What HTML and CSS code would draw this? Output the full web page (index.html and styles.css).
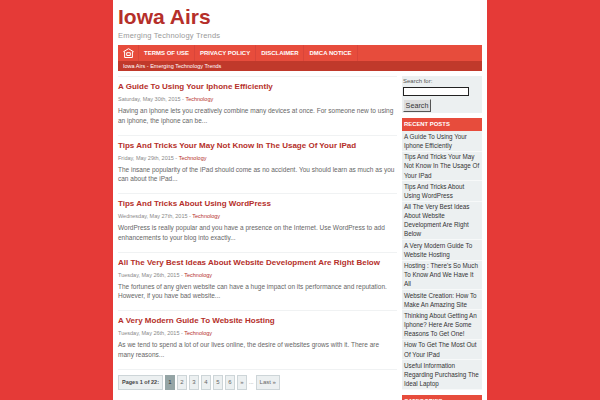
FILE: index.html
```html
<!DOCTYPE html>
<html lang="en">
<head>
<meta charset="UTF-8">
<title>Iowa Airs</title>
<link rel="stylesheet" href="styles.css">
</head>
<body>
<div class="wrapper">
  <div class="site-title">Iowa Airs</div>
  <div class="site-desc">Emerging Technology Trends</div>

  <div class="nav">
    <a class="nav-item nav-home">
      <svg width="11" height="10" viewBox="0 0 11 10" fill="none" stroke="#fff" stroke-width="1"><path d="M0.3 3.8 5.5 0.7 10.7 3.8"/><path d="M1.6 3.4V9.5H9.4V3.4"/><path d="M3.7 4.7H7.3V7.5H3.7Z"/></svg>
    </a>
    <a class="nav-item">TERMS OF USE</a>
    <a class="nav-item">PRIVACY POLICY</a>
    <a class="nav-item">DISCLAIMER</a>
    <a class="nav-item">DMCA NOTICE</a>
  </div>
  <div class="subnav">Iowa Airs - Emerging Technology Trends</div>

  <div class="columns">
    <div class="content">
      <div class="post">
        <h2 class="post-title">A Guide To Using Your Iphone Efficiently</h2>
        <div class="post-meta">Saturday, May 30th, 2015 - <a>Technology</a></div>
        <p>Having an iphone lets you creatively combine many devices at once. For someone new to using an iphone, the iphone can be...</p>
      </div>
      <div class="post">
        <h2 class="post-title">Tips And Tricks Your May Not Know In The Usage Of Your IPad</h2>
        <div class="post-meta">Friday, May 29th, 2015 - <a>Technology</a></div>
        <p>The insane popularity of the iPad should come as no accident. You should learn as much as you can about the iPad...</p>
      </div>
      <div class="post">
        <h2 class="post-title">Tips And Tricks About Using WordPress</h2>
        <div class="post-meta">Wednesday, May 27th, 2015 - <a>Technology</a></div>
        <p>WordPress is really popular and you have a presence on the Internet. Use WordPress to add enhancements to your blog into exactly...</p>
      </div>
      <div class="post">
        <h2 class="post-title">All The Very Best Ideas About Website Development Are Right Below</h2>
        <div class="post-meta">Tuesday, May 26th, 2015 - <a>Technology</a></div>
        <p>The fortunes of any given website can have a huge impact on its performance and reputation. However, if you have bad website...</p>
      </div>
      <div class="post">
        <h2 class="post-title">A Very Modern Guide To Website Hosting</h2>
        <div class="post-meta">Tuesday, May 26th, 2015 - <a>Technology</a></div>
        <p>As we tend to spend a lot of our lives online, the desire of websites grows with it. There are many reasons...</p>
      </div>
      <div class="pagination">
        <span class="page page-label">Pages 1 of 22:</span>
        <span class="page page-current">1</span>
        <span class="page">2</span>
        <span class="page">3</span>
        <span class="page">4</span>
        <span class="page">5</span>
        <span class="page">6</span>
        <span class="page">»</span>
        <span class="page-dots">...</span>
        <span class="page page-last">Last »</span>
      </div>
    </div>

    <div class="sidebar">
      <div class="search">
        <label class="search-label">Search for:</label>
        <input class="search-input" type="text">
        <button class="search-btn">Search</button>
      </div>
      <div class="widget-title">RECENT POSTS</div>
      <ul class="widget-list">
        <li>A Guide To Using Your Iphone Efficiently</li>
        <li>Tips And Tricks Your May Not Know In The Usage Of Your IPad</li>
        <li>Tips And Tricks About Using WordPress</li>
        <li>All The Very Best Ideas About Website Development Are Right Below</li>
        <li>A Very Modern Guide To Website Hosting</li>
        <li>Hosting : There's So Much To&nbsp;Know And We Have It All</li>
        <li>Website Creation: How To Make An Amazing Site</li>
        <li>Thinking About Getting An Iphone? Here Are Some Reasons To Get One!</li>
        <li>How To Get The Most Out Of Your IPad</li>
        <li>Useful Information Regarding Purchasing The Ideal Laptop</li>
      </ul>
      <div class="widget-title">CATEGORIES</div>
    </div>
  </div>
</div>
</body>
</html>
```

FILE: styles.css
```css
:root {
  --red: #e74c3c;
  --red-page: #e53a37;
  --red-dark: #c0392b;
  --title-red: #b52f2a;
  --panel: #ecf0f1;
  --line: #f0f2f3;
  --text: #666;
}

* {
  margin: 0;
  padding: 0;
  box-sizing: border-box;
}

html, body {
  height: 400px;
  overflow: hidden;
}

body {
  font-family: "Liberation Sans", Arial, sans-serif;
  background: var(--red-page);
}

.wrapper {
  width: 374px;
  height: 400px;
  margin: 0 auto;
  padding: 0 5px;
  background: #fff;
  overflow: hidden;
}

.site-title {
  font-size: 21px;
  font-weight: bold;
  color: var(--title-red);
  line-height: 26px;
  padding-top: 4px;
  height: 31px;
}

.site-desc {
  font-size: 7.5px;
  letter-spacing: 0.2px;
  color: #999;
  line-height: 10px;
  margin-bottom: 4px;
}

.nav {
  display: flex;
  height: 16px;
  background: var(--red);
}

.nav-item {
  display: flex;
  align-items: center;
  padding: 0 5px;
  font-size: 6px;
  font-weight: bold;
  color: #fff;
  border-right: 1px solid #d9453a;
}

.nav-home {
  padding: 0 4px 0 5px;
}

.subnav {
  height: 10px;
  line-height: 10px;
  padding-left: 5px;
  font-size: 5.5px;
  color: #fff;
  background: var(--red-dark);
}

.columns {
  display: flex;
  gap: 5px;
  margin-top: 5px;
}

.content {
  width: 279px;
}

.post {
  height: 58.5px;
  border-top: 1px solid var(--line);
  padding-top: 4px;
}

.post-title {
  font-size: 8px;
  font-weight: bold;
  color: var(--title-red);
  line-height: 12px;
}

.post-meta {
  font-size: 5.5px;
  color: #888;
  line-height: 9px;
  margin-top: 2px;
}

.post-meta a {
  color: var(--title-red);
}

.post p {
  font-size: 6.5px;
  color: var(--text);
  line-height: 9.75px;
  margin-top: 2px;
  padding-right: 2px;
}

.pagination {
  display: flex;
  align-items: center;
  gap: 2px;
  border-top: 1px solid var(--line);
  padding-top: 5px;
}

.page {
  font-size: 6px;
  color: #666;
  background: var(--panel);
  border: 1px solid #cdd5d8;
  height: 15px;
  line-height: 13px;
  padding: 0 2px;
  min-width: 10px;
  text-align: center;
}

.page-label {
  font-size: 5.5px;
  font-weight: bold;
  color: #444;
  padding: 0 3px;
}

.page-current {
  background: #95a5a6;
  border-color: #95a5a6;
  color: #333;
}

.page-last {
  padding: 0 3px;
}

.page-dots {
  font-size: 5.5px;
  color: #888;
}

.sidebar {
  width: 80px;
}

.search {
  background: var(--panel);
  padding: 1px 1px 1px;
  margin-bottom: 5px;
  height: 37px;
}

.search-label {
  display: block;
  font-size: 6px;
  color: #555;
  line-height: 9px;
}

.search-input {
  display: block;
  width: 66px;
  height: 9px;
  margin-top: 1px;
  background: #fff;
  border: 1px solid #222;
}

.search-btn {
  display: block;
  margin-top: 3px;
  width: 28px;
  height: 13px;
  font-family: inherit;
  font-size: 7.2px;
  color: #333;
  background: #ddd;
  border: 1px solid #555;
  border-top-color: #eee;
  border-left-color: #eee;
}

.widget-title {
  height: 13px;
  line-height: 13px;
  padding-left: 2px;
  font-size: 5.9px;
  font-weight: bold;
  color: #fff;
  background: var(--red);
}

.widget-list {
  list-style: none;
  padding-top: 0.4px;
  background: var(--panel);
  margin-bottom: 5px;
}

.widget-list li {
  padding: 0.6px 2px;
  font-size: 6.3px;
  color: #333;
  line-height: 9.1px;
  border-bottom: 1px solid #f7f9f9;
}
```
